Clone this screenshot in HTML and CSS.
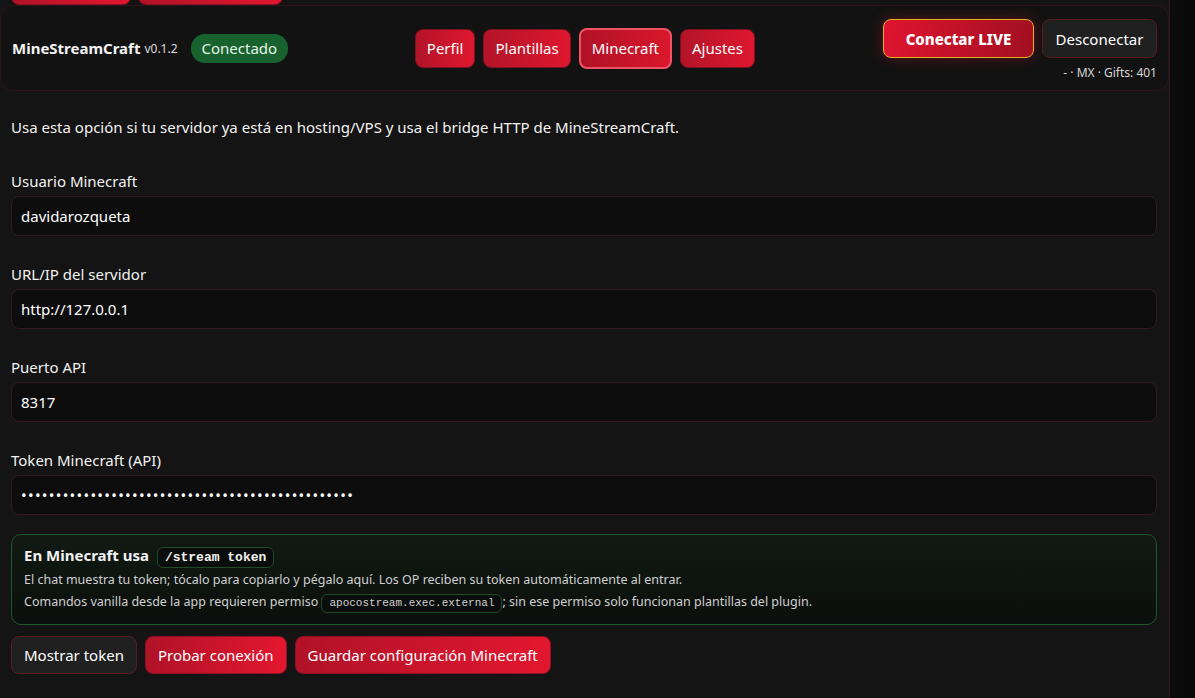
FILE: index.html
```html
<!DOCTYPE html>
<html lang="es">
<head>
    <meta charset="UTF-8">
    <meta name="viewport" content="width=device-width, initial-scale=1.0">
    <title>MineStreamCraft</title>
    <link rel="stylesheet" href="styles.css">
</head>
<body>

<div class="layout">
    <main class="main">
        <!-- previous section, scrolled under the header -->
        <div class="peek-row">
            <button class="btn btn-red peek-a" aria-label="Guardar"></button>
            <button class="btn btn-red peek-b" aria-label="Guardar plantillas"></button>
        </div>

        <!-- Header -->
        <header class="topbar">
            <div class="brand">
                <span class="brand-name">MineStreamCraft</span>
                <span class="brand-version">v0.1.2</span>
                <span class="status-badge">Conectado</span>
            </div>

            <nav class="tabs">
                <button class="tab">Perfil</button>
                <button class="tab">Plantillas</button>
                <button class="tab active">Minecraft</button>
                <button class="tab">Ajustes</button>
            </nav>

            <div class="live-box">
                <div class="live-buttons">
                    <button class="btn-live">Conectar LIVE</button>
                    <button class="btn btn-dark btn-disc">Desconectar</button>
                </div>
                <div class="live-meta">- · MX · Gifts: 401</div>
            </div>
        </header>

        <section class="panel">
            <p class="intro">Usa esta opción si tu servidor ya está en hosting/VPS y usa el bridge HTTP de MineStreamCraft.</p>

            <div class="field">
                <label>Usuario Minecraft</label>
                <input type="text" value="davidarozqueta">
            </div>

            <div class="field">
                <label>URL/IP del servidor</label>
                <input type="text" value="http://127.0.0.1">
            </div>

            <div class="field">
                <label>Puerto API</label>
                <input type="text" value="8317">
            </div>

            <div class="field">
                <label>Token Minecraft (API)</label>
                <input type="password" value="a1b2c3d4e5f6a1b2c3d4e5f6a1b2c3d4e5f6a1b2c3d4e5f6">
            </div>

            <div class="hint-box">
                <div class="hint-title">En Minecraft usa <code class="code-lg">/stream token</code></div>
                <div class="hint-line">El chat muestra tu token; tócalo para copiarlo y pégalo aquí. Los OP reciben su token automáticamente al entrar.</div>
                <div class="hint-line">Comandos vanilla desde la app requieren permiso <code class="code-sm">apocostream.exec.external</code>; sin ese permiso solo funcionan plantillas del plugin.</div>
            </div>

            <div class="actions">
                <button class="btn btn-dark">Mostrar token</button>
                <button class="btn btn-red">Probar conexión</button>
                <button class="btn btn-red">Guardar configuración Minecraft</button>
            </div>

            <div class="field">
                <label>Comando de prueba</label>
                <input type="text" value="">
            </div>
        </section>
    </main>

    <aside class="side"></aside>
</div>

</body>
</html>
```

FILE: styles.css
```css
body {
    margin: 0;
    padding: 0;
    background-color: #0b0b0b;
    color: #f2f2f2;
    font-family: "Noto Sans", "Open Sans", Arial, sans-serif;
    overflow: hidden;
    height: 698px;
}

.layout {
    display: flex;
    height: 100%;
}

.main {
    width: 1169px;
    background-color: #141414;
    border-right: 1px solid #2c171c;
    overflow: hidden;
}

.side {
    flex: 1;
    background: linear-gradient(90deg, #0c0c0c, #090909);
}

button {
    font-family: inherit;
}

.btn {
    height: 38px;
    padding: 0 12px;
    border-radius: 8px;
    font-size: 15px;
    color: #fff;
    cursor: pointer;
    white-space: nowrap;
}

.btn-red {
    background: linear-gradient(90deg, #b01228, #e2172f);
    border: 1px solid #8e1022;
}

.btn-dark {
    background-color: #202020;
    border: 1px solid #5c1a24;
}

.peek-row {
    display: flex;
    gap: 7px;
    padding: 0 11px;
    margin-top: -33px;
}

.peek-a { width: 120px; }
.peek-b { width: 145px; }

/* Header */
.topbar {
    display: flex;
    align-items: center;
    justify-content: space-between;
    height: 84px;
    padding: 0 11px;
    background-color: #121212;
    border: 1px solid #2e151b;
    border-radius: 12px;
}

.brand {
    display: flex;
    align-items: center;
    width: 404px;
}

.brand-name {
    font-size: 15px;
    font-weight: bold;
}

.brand-version {
    font-size: 12px;
    color: #ddd;
    margin-left: 4px;
}

.status-badge {
    margin-left: 13px;
    background-color: #18622f;
    color: #e6f4e8;
    font-size: 15px;
    padding: 4px 11px 5px;
    border-radius: 14px;
}

.tabs {
    display: flex;
    align-items: center;
    gap: 8px;
    margin-right: 128px;
}

.tab {
    height: 39px;
    padding: 0 11px;
    border-radius: 8px;
    font-size: 15px;
    color: #fff;
    background: linear-gradient(90deg, #b31428, #de172f);
    border: 1px solid #7e1020;
}

.tab.active {
    background: linear-gradient(90deg, #b01226, #d9172d);
    border: 2px solid #f05464;
    height: 41px;
}

.live-box {
    display: flex;
    flex-direction: column;
    align-items: flex-end;
    margin-top: 4px;
}

.live-buttons {
    display: flex;
    gap: 8px;
}

.btn-live {
    width: 151px;
    height: 39px;
    border-radius: 8px;
    border: 1px solid #e4b21a;
    background: linear-gradient(100deg, #e0142f, #a10f21);
    color: #fff;
    font-size: 15px;
    font-weight: 800;
    box-shadow: 0 0 14px rgba(220, 20, 45, 0.35);
}

.btn-disc {
    height: 39px;
    width: 115px;
    font-size: 15px;
}

.live-meta {
    font-size: 12px;
    color: #d6d6d6;
    margin-top: 6px;
}

/* Content */
.panel {
    padding: 0 12px 0 11px;
}

.intro {
    font-size: 15px;
    line-height: 20px;
    margin: 26px 0 34px;
}

.field {
    margin-bottom: 28px;
}

.field label {
    display: block;
    font-size: 15px;
    line-height: 20px;
    margin-bottom: 5px;
}

.field input {
    box-sizing: border-box;
    width: 100%;
    height: 40px;
    padding: 0 9px;
    background-color: #0d0d0d;
    border: 1px solid #34191f;
    border-radius: 8px;
    color: #fff;
    font-family: inherit;
    font-size: 15px;
    outline: none;
}

.field input[type="password"] {
    letter-spacing: 1.3px;
}

.hint-box {
    margin-top: -9px;
    padding: 10px 12px 11px;
    background: linear-gradient(180deg, #101a13, #0c0f0d);
    border: 1px solid #1e5a2a;
    border-radius: 10px;
}

.hint-title {
    font-size: 15px;
    font-weight: bold;
    margin-bottom: 1px;
}

.code-lg {
    display: inline-block;
    margin-left: 4px;
    padding: 2px 7px;
    font-family: "Liberation Mono", monospace;
    font-size: 13px;
    font-weight: bold;
    background-color: #0a0d0b;
    border: 1px solid #1f4a28;
    border-radius: 6px;
}

.hint-line {
    font-size: 12.5px;
    color: #d0d0d0;
    line-height: 22px;
}

.code-sm {
    display: inline-block;
    padding: 0 7px;
    font-family: "Liberation Mono", monospace;
    font-size: 11px;
    line-height: 17px;
    background-color: #0a0d0b;
    border: 1px solid #1f4a28;
    border-radius: 6px;
}

.actions {
    display: flex;
    gap: 8px;
    margin-top: 11px;
    margin-bottom: 22px;
}
```
